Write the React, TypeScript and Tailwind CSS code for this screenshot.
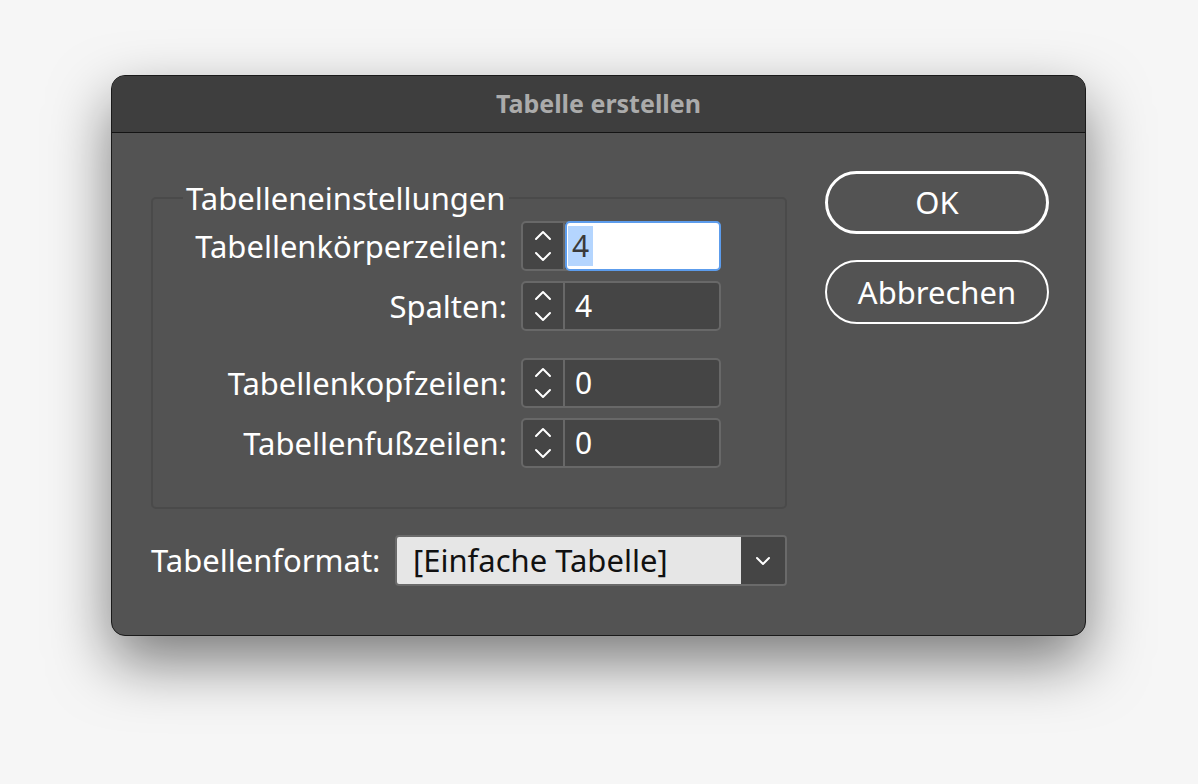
import React from "react";

function Chevrons() {
  return (
    <svg width="24" height="42" viewBox="0 0 24 42" fill="none" stroke="white" strokeWidth="2" strokeLinecap="round" strokeLinejoin="round">
      <path d="M5 14 L12 7 L19 14" />
      <path d="M5 28 L12 35 L19 28" />
    </svg>
  );
}

function SpinRow({ label, value, focused }: { label: string; value: string; focused?: boolean }) {
  return (
    <div className="flex items-center h-[50px]">
      <div className="w-[368px] pr-[14px] text-right text-[31px] text-white leading-none">{label}</div>
      <div className="flex h-[50px] w-[200px] rounded-[5px] border-2 border-[#686868] bg-[#454545]">
        <div className="flex w-[42px] items-center justify-center border-r-2 border-[#686868]">
          <Chevrons />
        </div>
        {focused ? (
          <div className="-my-[2px] -mr-[2px] flex flex-1 items-stretch rounded-[5px] border-2 border-[#5c9cec] bg-white py-[3px] pl-[1px]">
            <span className="flex items-center bg-[#b4d5fe] px-[4px] text-[30px] leading-none text-[#3a3a3a]">{value}</span>
          </div>
        ) : (
          <div className="flex flex-1 items-center pl-[10px] text-[30px] leading-none text-white">{value}</div>
        )}
      </div>
    </div>
  );
}

export default function App() {
  return (
    <div className="w-[1198px] h-[784px] bg-[#f6f6f6] pl-[111px] pt-[75px] font-['Noto_Sans',sans-serif]">
      <div className="w-[975px] h-[561px] rounded-[14px] border border-[#1a1a1a] overflow-hidden bg-[#535353] shadow-[0_26px_60px_rgba(0,0,0,0.5)] flex flex-col">
        <div className="h-[57px] shrink-0 bg-[#3e3e3e] border-b border-[#141414] flex items-center justify-center">
          <span className="text-[25px] font-bold text-[#ababab]">Tabelle erstellen</span>
        </div>
        <div className="flex flex-1">
          <div className="w-[675px] pl-[39px] pt-[50px]">
            <fieldset className="w-[636px] h-[326px] rounded-[5px] border-2 border-[#4a4a4a] pb-[36px]">
              <legend className="ml-[30px] px-[3px] text-[31px] text-white leading-[30px]">Tabelleneinstellungen</legend>
              <div className="mt-[8px] flex flex-col">
                <SpinRow label="Tabellenkörperzeilen:" value="4" focused />
                <div className="h-[10px]" />
                <SpinRow label="Spalten:" value="4" />
                <div className="h-[27px]" />
                <SpinRow label="Tabellenkopfzeilen:" value="0" />
                <div className="h-[10px]" />
                <SpinRow label="Tabellenfußzeilen:" value="0" />
              </div>
            </fieldset>
            <div className="mt-[26px] flex items-center h-[51px]">
              <div className="w-[244px] text-[31px] text-white">Tabellenformat:</div>
              <div className="flex h-[51px] w-[392px] rounded-[4px] border-2 border-[#6a6a6a] overflow-hidden">
                <div className="flex flex-1 items-center bg-[#e6e6e6] pl-[16px] text-[31px] text-[#111]">[Einfache Tabelle]</div>
                <div className="flex w-[44px] items-center justify-center bg-[#454545]">
                  <svg width="18" height="12" viewBox="0 0 18 12" fill="none" stroke="white" strokeWidth="2" strokeLinecap="round" strokeLinejoin="round">
                    <path d="M3 3 L9 9 L15 3" />
                  </svg>
                </div>
              </div>
            </div>
          </div>
          <div className="flex flex-col pl-[38px] pt-[38px] gap-[26px]">
            <button className="flex h-[63px] w-[224px] items-center justify-center rounded-full border-[3px] border-white text-[31px] text-white">OK</button>
            <button className="flex h-[64px] w-[224px] items-center justify-center rounded-full border-2 border-white text-[31px] text-white">Abbrechen</button>
          </div>
        </div>
      </div>
    </div>
  );
}
